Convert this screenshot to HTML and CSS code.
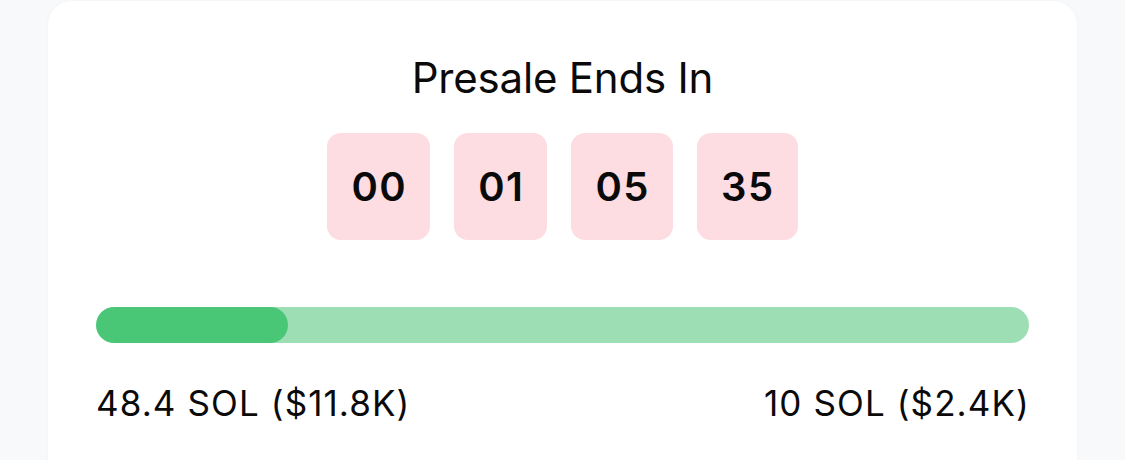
FILE: index.html
```html
<!DOCTYPE html>
<html>
<head>
<meta charset="utf-8">
<link rel="stylesheet" href="styles.css">
</head>
<body>
<div class="card">
  <h2 class="title">Presale Ends In</h2>
  <div class="countdown">
    <div class="unit">00</div>
    <div class="unit">01</div>
    <div class="unit">05</div>
    <div class="unit">35</div>
  </div>
  <div class="progress">
    <div class="progress-fill" style="width: 20.6%"></div>
  </div>
  <div class="amounts">
    <span>48.4 SOL ($11.8K)</span>
    <span class="amount-right">10 SOL ($2.4K)</span>
  </div>
</div>
</body>
</html>
```
FILE: styles.css
```css
html, body {
  margin: 0;
  padding: 0;
}
body {
  background: #f8f9fb;
  font-family: Inter, "Noto Sans", "DejaVu Sans", sans-serif;
  color: #0a0a0a;
  height: 460px;
  overflow: hidden;
}
.card {
  margin: 1px 0 0 48px;
  width: 1029px;
  box-sizing: border-box;
  background: #ffffff;
  border-radius: 24px;
  padding: 52px 48px 0;
  box-shadow: 0 0 3px rgba(0, 0, 0, 0.04);
  height: 480px;
}
.title {
  margin: 0 0 30px;
  text-align: center;
  font-size: 42px;
  font-weight: 400;
  line-height: 1.2;
  letter-spacing: -0.2px;
}
.countdown {
  display: flex;
  justify-content: center;
  gap: 24px;
}
.unit {
  background: #fddce2;
  border-radius: 14px;
  padding: 24px 23px 24px 24px;
  font-size: 40px;
  font-weight: 600;
  line-height: 59px;
  letter-spacing: 1.5px;
}
.progress {
  margin-top: 67px;
  height: 36px;
  border-radius: 18px;
  background: #9edeb4;
  overflow: hidden;
}
.progress-fill {
  height: 100%;
  background: #4ac776;
  border-radius: 18px;
}
.amounts {
  margin-top: 39px;
  display: flex;
  justify-content: space-between;
  font-size: 35px;
  line-height: 1.2;
  letter-spacing: 1.1px;
}
.amount-right {
  margin-right: -1px;
}
```
